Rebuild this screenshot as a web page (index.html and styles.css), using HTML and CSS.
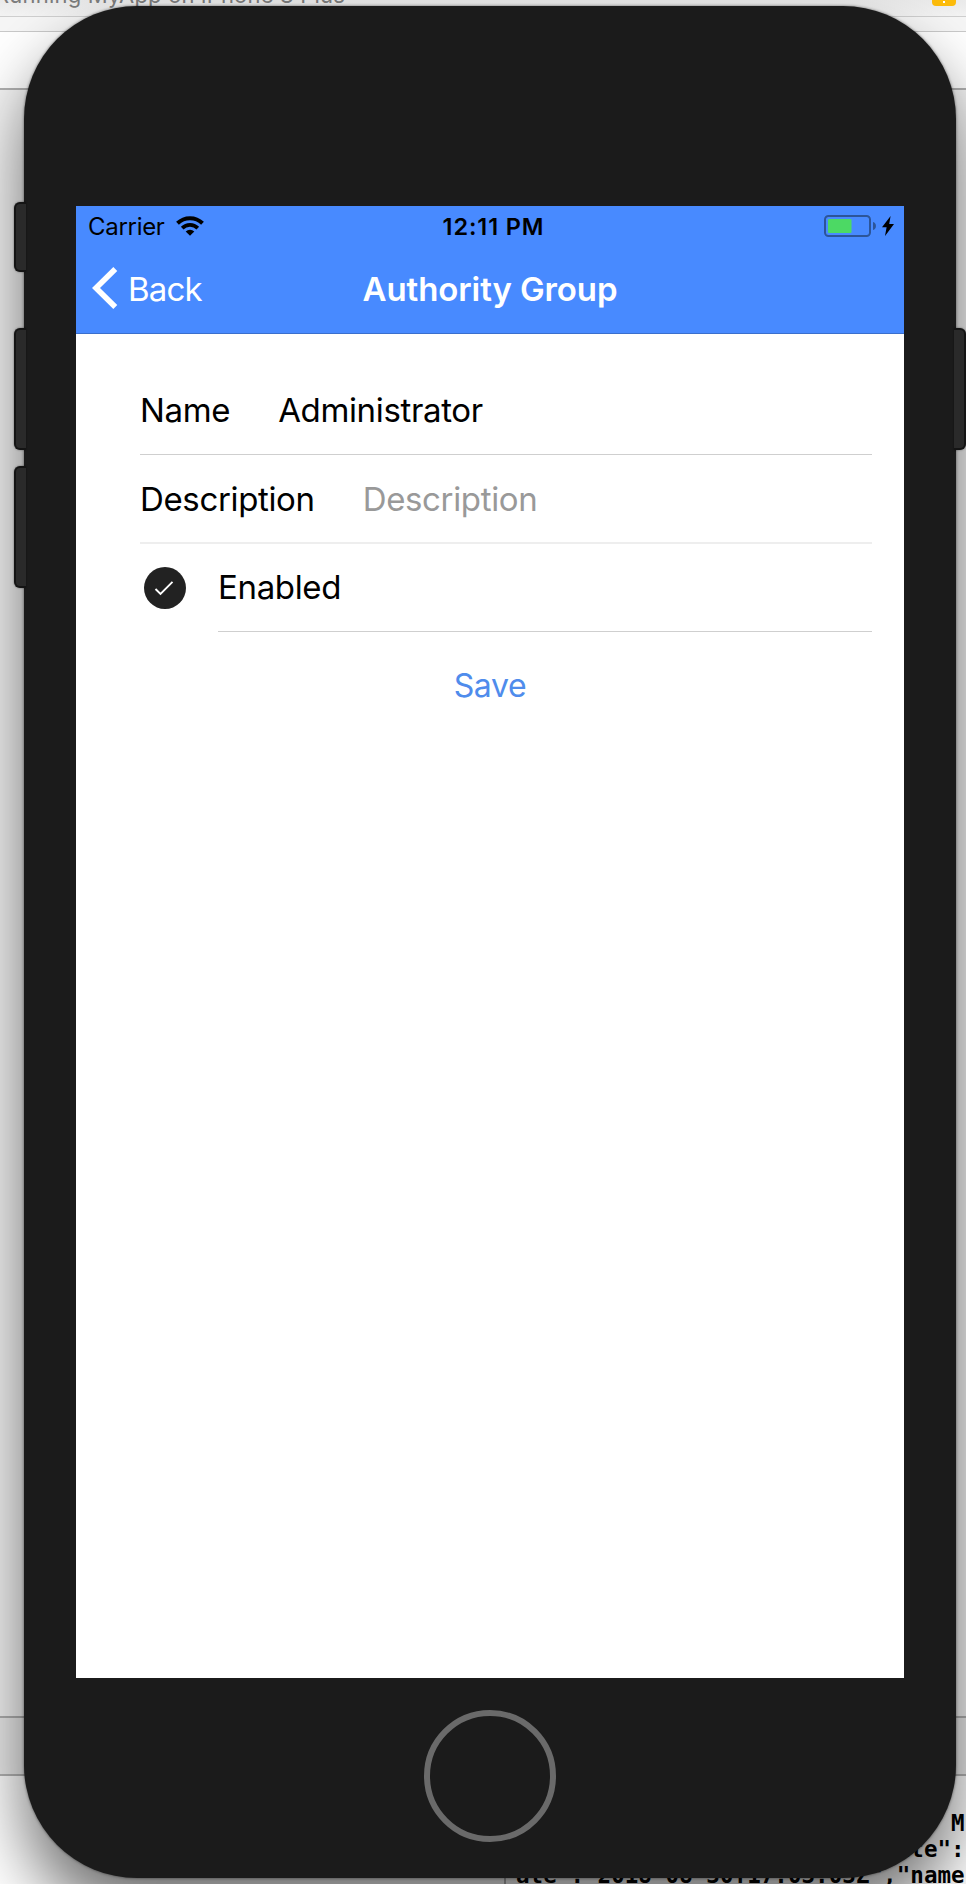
FILE: index.html
```html
<!DOCTYPE html>
<html lang="en">
<head>
<meta charset="utf-8">
<title>Authority Group</title>
<link rel="stylesheet" href="styles.css">
</head>
<body>
<div class="desktop">
  <div class="ide">
    <div class="ide-toolbar"><span class="ide-status">Running MyApp on iPhone 8 Plus</span><span class="ide-warning"><i></i></span></div>
    <div class="ide-tabs"></div>
    <div class="ide-jump"></div>
    <div class="ide-editor"></div>
    <div class="ide-debugbar"></div>
    <div class="ide-console">
      <div class="console-vars"></div>
      <pre class="console-log">                                 .

                                M
                            ate":
ate":"2018-08-30T17:03:03Z","name</pre>
    </div>
  </div>

  <div class="phone">
    <i class="key key-mute"></i>
    <i class="key key-up"></i>
    <i class="key key-down"></i>
    <i class="key key-power"></i>
    <div class="screen">
      <header class="header">
        <div class="statusbar">
          <div class="status-left">
            <span class="carrier">Carrier</span>
            <svg class="wifi" width="28" height="20" viewBox="0 0 28 20">
              <path d="M1.5 7.2 A18 18 0 0 1 26.5 7.2" fill="none" stroke="#000" stroke-width="4"/>
              <path d="M6.2 12.1 A11 11 0 0 1 21.8 12.1" fill="none" stroke="#000" stroke-width="3.7"/>
              <path d="M9.7 15.4 A6.2 6.2 0 0 1 18.3 15.4 L14 19.8 Z"/>
            </svg>
          </div>
          <span class="clock">12:11 PM</span>
          <div class="status-right">
            <svg width="54" height="22" viewBox="0 0 54 22">
              <rect x="1" y="1" width="45" height="20" rx="3.5" fill="none" stroke="#2c5599" stroke-width="2"/>
              <rect x="4" y="4" width="23.500" height="14" rx="1" fill="#4cd964"/>
              <path d="M49 7 A4.200 4.200 0 0 1 49 15 Z" fill="#2c5599"/>
            </svg>
            <svg class="bolt" width="12" height="20" viewBox="0 0 12 20"><path d="M8.600 0 L0 11.300 L4.600 11.300 L3 20 L12 8 L7.200 8 Z"/></svg>
          </div>
        </div>
        <div class="navbar">
          <div class="back">
            <svg width="26" height="42" viewBox="0 0 26 42"><path d="M23.300 2 L4 21 L23.300 40" fill="none" stroke="#fff" stroke-width="5.600"/></svg>
            <span class="back-label">Back</span>
          </div>
          <h1 class="title">Authority Group</h1>
        </div>
      </header>
      <main class="list">
        <div class="row"><label>Name</label><span>Administrator</span></div>
        <div class="row row-soft"><label>Description</label><span class="placeholder">Description</span></div>
        <div class="row-check">
          <svg class="check" width="42" height="42" viewBox="0 0 42 42"><circle cx="21" cy="21" r="21" fill="#222"/><path d="M11.500 22 L16.500 27 L28.500 14.800" fill="none" stroke="#fff" stroke-width="1.900"/></svg>
          <div class="row row-inner"><label>Enabled</label></div>
        </div>
        <div class="actions"><span>Save</span></div>
      </main>
    </div>
    <div class="home"></div>
  </div>
</div>
</body>
</html>
```
FILE: styles.css
```css
* { box-sizing: border-box; }
body { margin: 0; font-family: Inter, "Liberation Sans", sans-serif; }
.desktop { position: relative; width: 966px; height: 1884px; overflow: hidden; }

.ide { display: flex; flex-direction: column; height: 100%; background: #fff; }
.ide-toolbar { display: flex; justify-content: space-between; height: 17px; background: linear-gradient(#eaeaea, #f3f3f3); border-bottom: 1px solid #cfcfcf; }
.ide-status { margin: -18px 0 0 -5px; font-size: 22px; line-height: 26px; letter-spacing: 0.2px; color: #7c7c7c; white-space: nowrap; height: 26px; }
.ide-warning { display: flex; justify-content: center; width: 24px; height: 6px; margin-right: 10px; border-radius: 0 0 4px 4px; background: #fdbc0b; }
.ide-warning i { width: 2px; height: 2px; margin-top: 1px; background: #fff; }
.ide-tabs { height: 15px; background: #f6f6f6; border-bottom: 1px solid #c9c9c9; }
.ide-jump { height: 58px; border-bottom: 2px solid #b0b0b0; }
.ide-editor { height: 1628px; background: #f4f4f4; border-bottom: 2px solid #b0b0b0; }
.ide-debugbar { height: 58px; background: #ececec; border-bottom: 2px solid #b4b4b4; }
.ide-console { display: flex; height: 108px; overflow: hidden; }
.console-vars { width: 506px; border-right: 2px solid #b4b4b4; flex: none; }
.console-log { margin: -18px 0 0 10px; font: bold 22.5px/26px "DejaVu Sans Mono", monospace; letter-spacing: 0.05px; color: #000; }

.phone { position: absolute; left: 24px; top: 6px; width: 932px; height: 1872px; padding: 200px 52px 0; border-radius: 113px; background: #1b1b1b; box-shadow: 0 0 3px rgba(0,0,0,.55), 0 38px 66px rgba(0,0,0,.56); }
.key { position: absolute; width: 12px; height: 122px; background: #2a2a2a; border: 2px solid #141414; box-shadow: 0 0 2px rgba(0,0,0,.5); }
.key-mute, .key-up, .key-down { left: -10px; border-right: 0; border-radius: 6px 0 0 6px; }
.key-mute { top: 196px; height: 70px; }
.key-up { top: 322px; }
.key-down { top: 460px; }
.key-power { top: 322px; right: -10px; border-left: 0; border-radius: 0 6px 6px 0; }

.screen { width: 828px; height: 1472px; background: #fff; }
.header { height: 128px; background: #488aff; border-bottom: 1px solid #3a6fcc; }
.statusbar { display: grid; grid-template-columns: 1fr auto 1fr; align-items: center; height: 39px; padding: 0 10px 0 12px; color: #000; }
.status-left { display: flex; align-items: center; gap: 11px; }
.carrier { font-size: 24px; line-height: 38px; letter-spacing: -0.3px; padding-top: 2px; }
.clock { font-size: 23.5px; line-height: 38px; font-weight: 600; letter-spacing: 0.9px; padding: 1px 0 0 5px; }
.status-right { display: flex; justify-content: flex-end; align-items: center; gap: 4px; }
.navbar { display: grid; grid-template-columns: 1fr auto 1fr; align-items: center; height: 87px; padding: 0 16px; color: #fff; }
.back { display: flex; align-items: center; gap: 10px; }
.back svg { margin-top: -2px; }
.back-label { font-size: 33px; letter-spacing: -0.8px; }
.title { margin: 0; font-size: 33px; font-weight: 600; letter-spacing: -0.1px; }

.list { padding: 32px 32px 0 64px; font-size: 33px; letter-spacing: -0.35px; color: #000; }
.row { display: flex; align-items: center; gap: 48px; height: 89px; border-bottom: 1px solid #cfcfcf; }
.row-soft { border-bottom: 2px solid #eee; }
.row-check { display: flex; align-items: center; }
.check { margin: 0 32px 0 4px; flex: none; }
.row-inner { flex: 1; height: 88px; padding-bottom: 2px; }
.placeholder { color: #999; }
.actions { display: flex; justify-content: center; padding-top: 34px; margin-left: -32px; font-size: 32px; color: #4f8cec; }
.home { width: 132px; height: 132px; margin: 32px auto 0; border: 6px solid #6a6a6a; border-radius: 50%; }
```
